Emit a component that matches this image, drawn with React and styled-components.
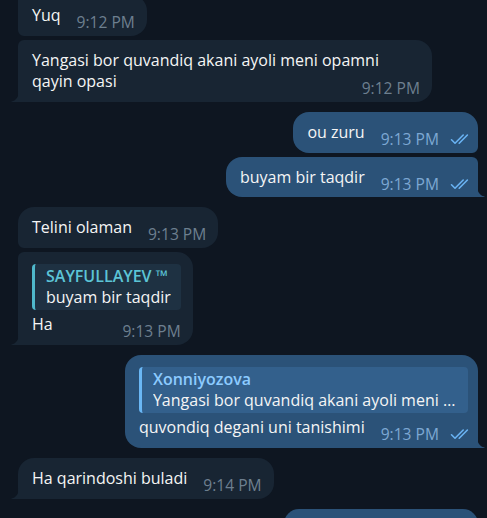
import React from "react";
import styled, { createGlobalStyle, css } from "styled-components";

const C = {
  bg: "#0e1621",
  inBg: "#182533",
  outBg: "#2b5278",
  text: "#f5f5f5",
  inTime: "#6d7f8f",
  outTime: "#7da8d3",
  check: "#6ab3f3",
  inReplyBg: "#1e3142",
  inReplyBar: "#4fb8cb",
  inReplyName: "#5cc4d6",
  outReplyBg: "#33608c",
  outReplyBar: "#6ab7f5",
  outReplyName: "#8ccbff",
};

const Global = createGlobalStyle`
  html, body { margin: 0; padding: 0; background: ${C.bg}; }
  body { font-family: "Open Sans", "Noto Sans", sans-serif; -webkit-font-smoothing: antialiased; }
`;

const Screen = styled.div`
  width: 487px;
  height: 518px;
  overflow: hidden;
  background: ${C.bg};
`;

const List = styled.div`
  display: flex;
  flex-direction: column;
  gap: 10px;
  margin-top: -5px;
  padding: 0 9px 0 18px;
`;

const Group = styled.div`
  display: flex;
  flex-direction: column;
  gap: 4px;
  align-items: ${(p) => (p.$out ? "flex-end" : "flex-start")};
`;

const BIG = 16;
const SMALL = 6;

const Bubble = styled.div`
  position: relative;
  display: flow-root;
  box-sizing: border-box;
  max-width: 414px;
  width: ${(p) => (p.$w ? `${p.$w}px` : "fit-content")};
  min-height: ${(p) => (p.$w ? "30px" : "0")};
  background: ${(p) => (p.$out ? C.outBg : C.inBg)};
  color: ${C.text};
  font-size: 16px;
  line-height: 21px;
  padding: ${(p) => (p.$reply ? "12px" : "10px")} ${(p) => (p.$out ? "7px" : "12px")}
    ${(p) => (p.$tall ? "6px" : "5px")} 14px;
  ${(p) =>
    p.$out
      ? css`
          border-radius: ${BIG}px ${p.$first ? BIG : SMALL}px
            ${p.$tail ? 0 : SMALL}px ${BIG}px;
        `
      : css`
          border-radius: ${p.$first ? BIG : SMALL}px ${BIG}px ${BIG}px
            ${p.$tail ? 0 : SMALL}px;
        `}
`;

const Tail = styled.svg`
  position: absolute;
  bottom: 0;
  width: 8px;
  height: 11px;
  ${(p) =>
    p.$out
      ? css`
          right: -7px;
          transform: scaleX(-1);
        `
      : css`
          left: -7px;
        `}
`;

const Meta = styled.span`
  float: right;
  display: inline-flex;
  align-items: center;
  gap: 11px;
  margin-left: 16px;
  padding-top: 9px;
  line-height: 16px;
  font-size: 15.6px;
  color: ${(p) => (p.$out ? C.outTime : C.inTime)};
`;

const Check = styled.svg`
  width: 21px;
  height: 12px;
  flex: none;
`;

const Reply = styled.div`
  box-sizing: border-box;
  margin: 0 ${(p) => (p.$out ? "3px" : "0")} 4px 0;
  padding: 2px 10px 2px 11px;
  border-left: 3px solid ${(p) => (p.$out ? C.outReplyBar : C.inReplyBar)};
  border-radius: 4px;
  background: ${(p) => (p.$out ? C.outReplyBg : C.inReplyBg)};
  ${(p) =>
    p.$clip &&
    css`
      width: 0;
      min-width: calc(100% - 3px);
    `}
`;

const ReplyName = styled.div`
  font-weight: 600;
  font-size: 16px;
  line-height: 20px;
  color: ${(p) => (p.$out ? C.outReplyName : C.inReplyName)};
  white-space: nowrap;
  overflow: hidden;
  text-overflow: ellipsis;
`;

const ReplyText = styled.div`
  font-size: 16px;
  line-height: 22px;
  white-space: nowrap;
  overflow: hidden;
  text-overflow: ellipsis;
`;

const TailShape = ({ out }) => (
  <Tail $out={out} viewBox="0 0 8 11" aria-hidden="true">
    <path d="M8 0 C8 5 5.5 9.5 0.5 10.6 C0.2 10.7 0.2 11 0.6 11 L8 11 Z" fill={out ? C.outBg : C.inBg} />
  </Tail>
);

const DoubleCheck = () => (
  <Check viewBox="0 0 21 12" aria-hidden="true">
    <g fill="none" stroke={C.check} strokeWidth="1.6" strokeLinecap="round" strokeLinejoin="round">
      <path d="M1.5 6.8 L5 10.2 L13.2 2" />
      <path d="M9.2 10.2 L17.4 2" />
    </g>
  </Check>
);

const Message = ({ out, first, tail, tall, time, reply, clip, w, children }) => (
  <Bubble $out={out} $first={first} $tail={tail} $tall={tall || !!reply} $reply={!!reply} $w={w}>
    {reply && (
      <Reply $out={out} $clip={clip}>
        <ReplyName $out={out}>{reply.name}</ReplyName>
        <ReplyText>{reply.text}</ReplyText>
      </Reply>
    )}
    {children}
    {time && (
      <Meta $out={out}>
        {time}
        {out && <DoubleCheck />}
      </Meta>
    )}
    {tail && <TailShape out={out} />}
  </Bubble>
);

export default function App() {
  return (
    <Screen>
      <Global />
      <List>
        <Group>
          <Message tall time="9:12 PM">Yuq</Message>
          <Message tall tail time="9:12 PM">
            Yangasi bor quvandiq akani ayoli meni opamni qayin opasi
          </Message>
        </Group>
        <Group $out>
          <Message out first tall time="9:13 PM">ou zuru</Message>
          <Message out tail time="9:13 PM">buyam bir taqdir</Message>
        </Group>
        <Group>
          <Message first tall time="9:13 PM">Telini olaman</Message>
          <Message tail time="9:13 PM" reply={{ name: "SAYFULLAYEV ™", text: "buyam bir taqdir" }}>
            Ha
          </Message>
        </Group>
        <Group $out>
          <Message
            out
            first
            tail
            clip
            time="9:13 PM"
            reply={{ name: "Xonniyozova", text: "Yangasi bor quvandiq akani ayoli meni opamni qayin opasi" }}
          >
            quvondiq degani uni tanishimi
          </Message>
        </Group>
        <Group>
          <Message first tail tall time="9:14 PM">Ha qarindoshi buladi</Message>
        </Group>
        <Group $out>
          <Message out first w={194} />
        </Group>
      </List>
    </Screen>
  );
}
